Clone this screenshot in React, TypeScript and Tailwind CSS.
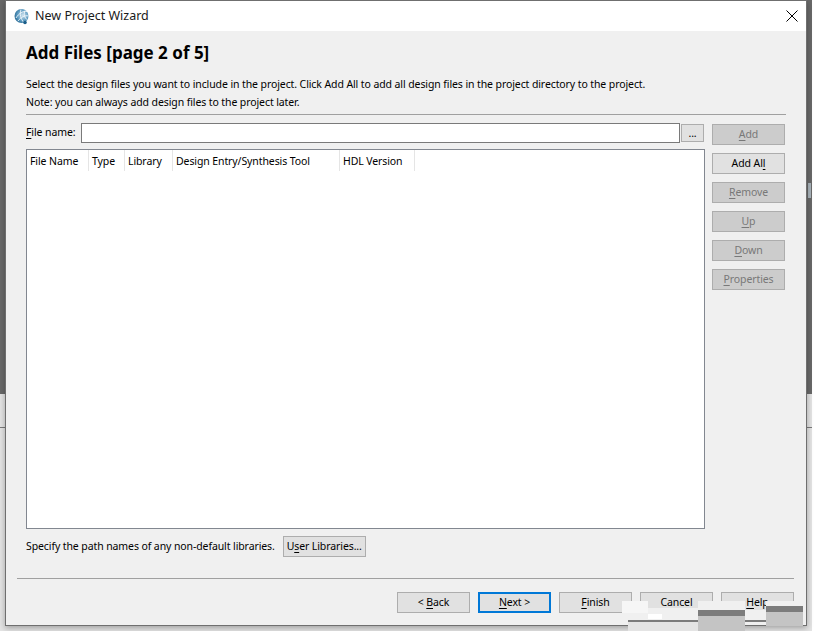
import React from 'react';

const FONT = 'font-["Noto_Sans","Open_Sans",sans-serif]';

const Mnemonic = ({ text, at }: { text: string; at: number }) => (
  <>
    {text.slice(0, at)}
    <span className="underline underline-offset-2">{text[at]}</span>
    {text.slice(at + 1)}
  </>
);

const SideButton = ({ text, at, enabled }: { text: string; at: number; enabled?: boolean }) => (
  <button
    className={`w-[73px] h-[21px] border border-[#adadad] leading-none ${
      enabled ? 'bg-[#e1e1e1] text-black' : 'bg-[#cccccc] text-[#787878]'
    }`}
  >
    <Mnemonic text={text} at={at} />
  </button>
);

const NavButton = ({ text, at, focused }: { text: string; at: number; focused?: boolean }) => (
  <button
    className={`w-[73px] h-[21px] bg-[#e1e1e1] leading-none text-black border ${
      focused ? 'border-2 border-[#0078d7]' : 'border-[#adadad]'
    }`}
  >
    <Mnemonic text={text} at={at} />
  </button>
);

const columns = [
  { label: 'File Name', width: 'w-[62px]' },
  { label: 'Type', width: 'w-[36px]' },
  { label: 'Library', width: 'w-[48px]' },
  { label: 'Design Entry/Synthesis Tool', width: 'w-[167px]' },
  { label: 'HDL Version', width: 'w-[75px]' },
];

const Globe = () => (
  <svg width="16" height="17" viewBox="0 0 16 17">
    <defs>
      <radialGradient id="globe" cx="0.6" cy="0.45" r="0.65">
        <stop offset="0" stopColor="#cfe3ef" />
        <stop offset="0.6" stopColor="#5f9cc2" />
        <stop offset="1" stopColor="#23668f" />
      </radialGradient>
    </defs>
    <circle cx="7.5" cy="8" r="7" fill="url(#globe)" />
    <path
      d="M2 10C5 5 9 3 13 3.5M4 13C7 9 11 7 14.5 8M7 1.5C5.5 6 6.5 11 10 14.5M11 2.5C9.5 6 10.5 10 13.5 12"
      stroke="#eef6fb"
      strokeWidth="0.9"
      fill="none"
    />
    <circle cx="11" cy="14.5" r="1.8" fill="#1c5f8a" />
  </svg>
);

export default function App() {
  return (
    <div className={`${FONT} relative w-[825px] h-[631px] overflow-hidden bg-white text-[10.5px] tracking-[-0.1px] text-black`}>
      {/* desktop behind the dialog */}
      <div className="absolute left-0 top-0 w-[812px] h-[394px] bg-[#696969]" />
      <div className="absolute left-0 top-[394px] w-[812px] h-[237px] bg-[#e4e4e4]" />
      <div className="absolute left-0 top-[427px] w-[812px] h-px bg-[#7a7a7a]" />
      <div className="absolute left-[808px] top-[183px] w-[3px] h-[15px] bg-[#a9b4bb]" />

      {/* dialog window */}
      <div className="absolute left-[5px] top-0 w-[802px] h-[626px] border border-[#6f6f6f] bg-[#f0f0f0] flex flex-col shadow-[0_2px_6px_rgba(0,0,0,0.3)]">
        <div className="h-[30px] shrink-0 bg-white flex items-center pl-[8px] pr-[2px]">
          <Globe />
          <span className="ml-[5px] text-[12.5px] tracking-normal text-[#1a1a1a]">New Project Wizard</span>
          <svg width="24" height="24" viewBox="0 0 24 24" className="ml-auto" stroke="#000" strokeWidth="1" fill="none">
            <path d="M6.5 6.5L17.5 17.5M17.5 6.5L6.5 17.5" />
          </svg>
        </div>

        <div className="flex-1 flex flex-col pl-[20px] pr-[20px]">
          <h1 className="mt-[12px] h-[20px] text-[17px] leading-[20px] tracking-normal font-bold">Add Files [page 2 of 5]</h1>
          <p className="mt-[12px] h-[18px] leading-[18px]">
            Select the design files you want to include in the project. Click Add All to add all design files in the project directory to the project.
          </p>
          <p className="h-[18px] leading-[18px]">Note: you can always add design files to the project later.</p>
          <div className="mt-[3px] h-px bg-[#a0a0a0]" />

          <div className="mt-[8px] flex gap-[7px]">
            <div className="w-[679px] flex flex-col">
              <div className="flex items-center h-[20px]">
                <label className="w-[55px]">
                  <Mnemonic text="File name:" at={0} />
                </label>
                <div className="w-[599px] h-[20px] bg-white border border-[#7a7a7a]" />
                <button className="ml-[1px] w-[23px] h-[18px] bg-[#e1e1e1] border border-[#adadad] leading-none">...</button>
              </div>

              <div className="mt-[6px] h-[380px] bg-white border border-[#828790] flex items-start">
                {columns.map((c) => (
                  <div key={c.label} className={`${c.width} h-[21px] pt-[3px] pl-[3px] flex items-center border-r border-[#e5e5e5]`}>
                    {c.label}
                  </div>
                ))}
              </div>

              <div className="mt-[7px] flex items-center">
                <span>Specify the path names of any non-default libraries.</span>
                <button className="ml-[8px] w-[83px] h-[21px] bg-[#e1e1e1] border border-[#adadad] leading-none">
                  <Mnemonic text="User Libraries..." at={1} />
                </button>
              </div>
            </div>

            <div className="flex flex-col gap-[8px] pt-[1px]">
              <SideButton text="Add" at={0} />
              <SideButton text="Add All" at={6} enabled />
              <SideButton text="Remove" at={0} />
              <SideButton text="Up" at={0} />
              <SideButton text="Down" at={0} />
              <SideButton text="Properties" at={0} />
            </div>
          </div>
        </div>

        <div className="ml-[11px] mr-[12px] h-px bg-[#a0a0a0]" />
        <div className="h-[46px] shrink-0 flex justify-end gap-[8px] pt-[13px] pr-[12px]">
          <NavButton text="< Back" at={2} />
          <NavButton text="Next >" at={0} focused />
          <NavButton text="Finish" at={0} />
          <NavButton text="Cancel" at={5} />
          <NavButton text="Help" at={0} />
        </div>
      </div>

      {/* watermark scraps pasted over the corner of the screenshot */}
      <div className="absolute left-[622px] top-[601px] w-[26px] h-[12px] bg-[#f6f6f6]" />
      <div className="absolute left-[628px] top-[613px] w-[70px] h-[7px] bg-[#f0f0f0]" />
      <div className="absolute left-[648px] top-[608px] w-[50px] h-[6px] bg-[#f0f0f0]" />
      <div className="absolute left-[648px] top-[614px] w-[14px] h-[5px] bg-white" />
      <div className="absolute left-[628px] top-[620px] w-[70px] h-[2px] bg-[#7c7c7c]" />
      <div className="absolute left-[628px] top-[622px] w-[70px] h-[9px] bg-[#e4e4e4]" />
      <div className="absolute left-[698px] top-[601px] w-[47px] h-[9px] bg-[#f0f0f0]" />
      <div className="absolute left-[698px] top-[610px] w-[47px] h-[6px] bg-[#7c7c7c]" />
      <div className="absolute left-[698px] top-[616px] w-[47px] h-[15px] bg-[#c4c4c4]" />
      <div className="absolute left-[745px] top-[610px] w-[21px] h-[10px] bg-[#f0f0f0]" />
      <div className="absolute left-[745px] top-[620px] w-[21px] h-[2px] bg-[#7c7c7c]" />
      <div className="absolute left-[766px] top-[601px] w-[37px] h-[5px] bg-[#f0f0f0]" />
      <div className="absolute left-[766px] top-[606px] w-[37px] h-[6px] bg-[#7c7c7c]" />
      <div className="absolute left-[766px] top-[612px] w-[37px] h-[14px] bg-[#c4c4c4]" />
    </div>
  );
}
